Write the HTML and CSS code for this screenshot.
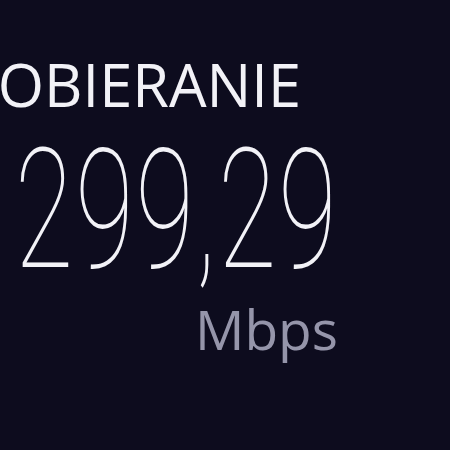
FILE: index.html
```html
<!DOCTYPE html>
<html lang="pl">
<head>
  <meta charset="UTF-8" />
  <meta name="viewport" content="width=device-width, initial-scale=1" />
  <link rel="stylesheet" href="styles.css">
</head>
<body>
  <div class="speed-panel">
    <div class="label">POBIERANIE</div>
    <div class="value">299,29</div>
    <div class="unit">Mbps</div>
  </div>
</body>
</html>
```

FILE: styles.css
```css
html, body {
  margin: 0;
  padding: 0;
  height: 100%;
}

body {
  background-color: #0d0c1e;
  font-family: 'Open Sans', 'Noto Sans', sans-serif;
  color: #f2f2f7;
  overflow: hidden;
}

.speed-panel {
  display: flex;
  flex-direction: column;
  padding-top: 54px;
}

.label {
  font-size: 59.5px;
  line-height: 1;
  margin-left: -38px;
  white-space: nowrap;
}

.value {
  font-family: 'Roboto', sans-serif;
  font-weight: 100;
  font-size: 167px;
  line-height: 1;
  letter-spacing: 3px;
  margin-top: 13px;
  padding-left: 23px;
  transform: scaleX(0.64);
  transform-origin: left center;
  white-space: nowrap;
}

.unit {
  font-size: 55px;
  line-height: 1;
  margin-top: 7px;
  padding-left: 195px;
  color: #9595aa;
}
```
